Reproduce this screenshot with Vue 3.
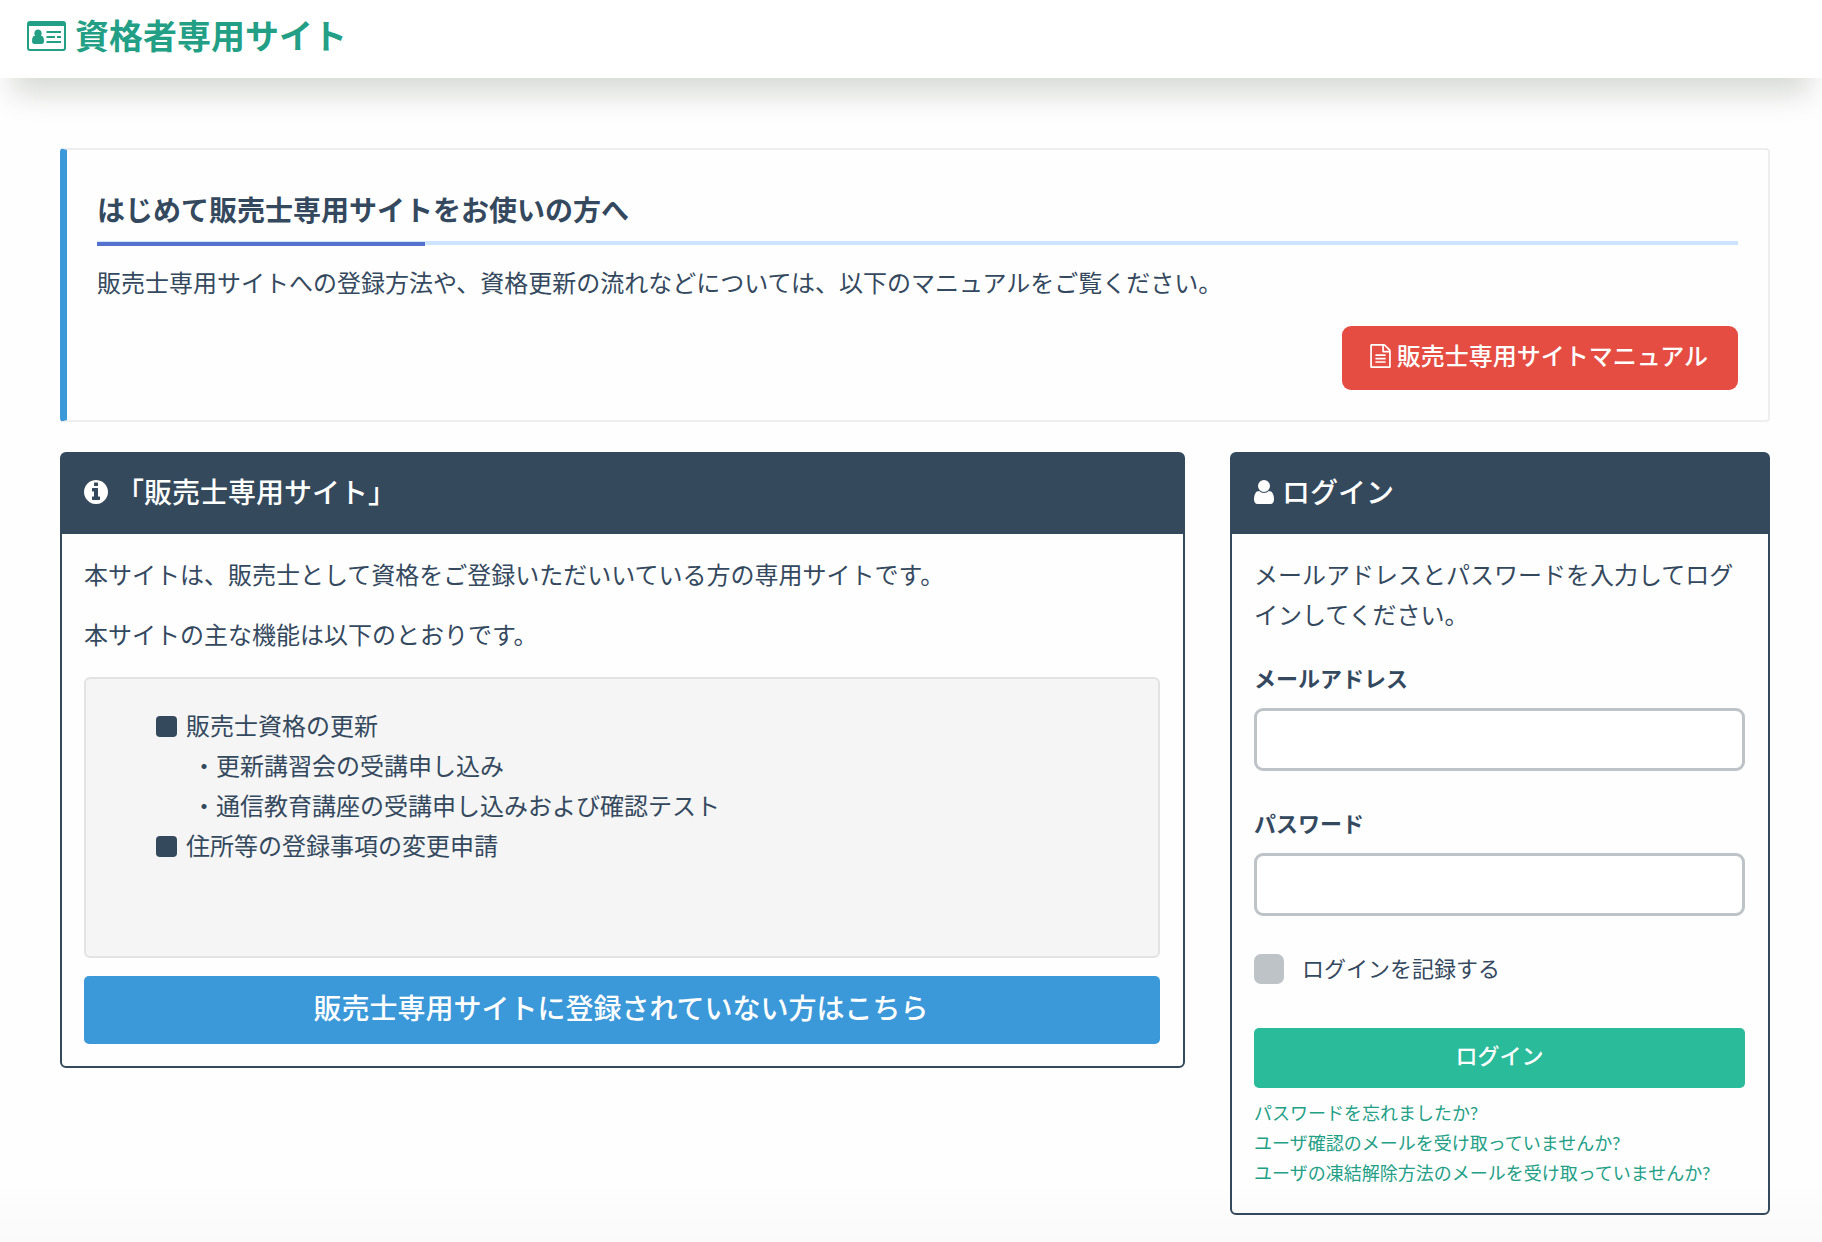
<script setup>
import { ref } from 'vue'

const email = ref('')
const password = ref('')
const remember = ref(false)

const features = [
  {
    title: '販売士資格の更新',
    items: ['更新講習会の受講申し込み', '通信教育講座の受講申し込みおよび確認テスト']
  },
  { title: '住所等の登録事項の変更申請', items: [] }
]

const helpLinks = [
  'パスワードを忘れましたか?',
  'ユーザ確認のメールを受け取っていませんか?',
  'ユーザの凍結解除方法のメールを受け取っていませんか?'
]
</script>

<template>
  <div class="page">
    <header class="site-header">
      <a class="brand" href="#">
        <svg class="brand-icon" viewBox="0 0 39 30" aria-hidden="true">
          <path
            fill-rule="evenodd"
            d="M3 0h33a3 3 0 0 1 3 3v24a3 3 0 0 1-3 3H3a3 3 0 0 1-3-3V3a3 3 0 0 1 3-3zM2 5v22q0 1 1 1h33q1 0 1-1V5z"
          />
          <path d="M11 8.500a3.500 3.700 0 0 1 2.800 6.100q3.200.4 3.200 5.400 0 3-2.500 3h-7q-2.500 0-2.500-3 0-5 3.200-5.400A3.500 3.700 0 0 1 11 8.500z" />
          <path d="M19.500 10H34v2H19.500zM19.500 15H28v2h-8.500zM30 15h4v2h-4zM19.500 20H34v2H19.500z" />
        </svg>
        <span>資格者専用サイト</span>
      </a>
    </header>

    <main class="content">
      <section class="callout">
        <h2>はじめて販売士専用サイトをお使いの方へ</h2>
        <p>販売士専用サイトへの登録方法や、資格更新の流れなどについては、以下のマニュアルをご覧ください。</p>
        <div class="callout-actions">
          <a class="btn btn-danger" href="#">
            <svg class="file-icon" viewBox="128 0 1536 1792" aria-hidden="true">
              <path d="M1596 380q28 28 48 76t20 88v1152q0 40-28 68t-68 28h-1344q-40 0-68-28t-28-68v-1600q0-40 28-68t68-28h896q40 0 88 20t76 48zm-444-244v376h376q-10-29-22-41l-313-313q-12-12-41-22zm384 1528v-1024h-416q-40 0-68-28t-28-68v-416h-768v1536h1280zm-1024-864q0-14 9-23t23-9h704q14 0 23 9t9 23v64q0 14-9 23t-23 9h-704q-14 0-23-9t-9-23v-64zm736 224q14 0 23 9t9 23v64q0 14-9 23t-23 9h-704q-14 0-23-9t-9-23v-64q0-14 9-23t23-9h704zm0 256q14 0 23 9t9 23v64q0 14-9 23t-23 9h-704q-14 0-23-9t-9-23v-64q0-14 9-23t23-9h704z" />
            </svg>
            <span>販売士専用サイトマニュアル</span>
          </a>
        </div>
      </section>

      <div class="columns">
        <section class="panel panel-about">
          <h3 class="panel-heading">
            <svg class="info-icon" viewBox="128 128 1536 1536" aria-hidden="true">
              <path d="M1152 1376v-160q0-14-9-23t-23-9h-96v-512q0-14-9-23t-23-9h-320q-14 0-23 9t-9 23v160q0 14 9 23t23 9h96v320h-96q-14 0-23 9t-9 23v160q0 14 9 23t23 9h448q14 0 23-9t9-23zm-128-896v-160q0-14-9-23t-23-9h-192q-14 0-23 9t-9 23v160q0 14 9 23t23 9h192q14 0 23-9t9-23zm640 416q0 209-103 385.500t-279.500 279.500-385.500 103-385.500-103-279.500-279.500-103-385.500 103-385.500 279.500-279.500 385.500-103 385.500 103 279.500 279.500 103 385.500z" />
            </svg>
            <span>「販売士専用サイト」</span>
          </h3>
          <div class="panel-body">
            <p>本サイトは、販売士として資格をご登録いただいいている方の専用サイトです。</p>
            <p>本サイトの主な機能は以下のとおりです。</p>
            <div class="well">
              <ul class="features">
                <li v-for="feature in features" :key="feature.title">
                  <span class="feature">{{ feature.title }}</span>
                  <ul v-if="feature.items.length" class="sub-features">
                    <li v-for="item in feature.items" :key="item">・{{ item }}</li>
                  </ul>
                </li>
              </ul>
            </div>
            <a class="btn btn-info" href="#">販売士専用サイトに登録されていない方はこちら</a>
          </div>
        </section>

        <section class="panel panel-login">
          <h3 class="panel-heading">
            <svg class="user-icon" viewBox="256 128 1280 1536" aria-hidden="true">
              <path d="M1536 1399q0 109-62.500 187t-150.500 78h-854q-88 0-150.500-78t-62.500-187q0-85 8.500-160.500t31.500-152 58.500-131 94-89 134.500-34.500q131 128 313 128t313-128q76 0 134.500 34.500t94 89 58.500 131 31.500 152 8.500 160.500zm-256-887q0 159-112.500 271.500t-271.500 112.500-271.500-112.500-112.500-271.500 112.500-271.500 271.500-112.500 271.500 112.500 112.500 271.500z" />
            </svg>
            <span>ログイン</span>
          </h3>
          <form class="panel-body" @submit.prevent>
            <p>メールアドレスとパスワードを入力してログインしてください。</p>
            <div class="field">
              <label for="email">メールアドレス</label>
              <input id="email" v-model="email" type="email" />
            </div>
            <div class="field">
              <label for="password">パスワード</label>
              <input id="password" v-model="password" type="password" />
            </div>
            <div class="remember">
              <input id="remember" v-model="remember" type="checkbox" />
              <label for="remember">ログインを記録する</label>
            </div>
            <button class="btn btn-primary" type="submit">ログイン</button>
            <ul class="help-links">
              <li v-for="link in helpLinks" :key="link"><a href="#">{{ link }}</a></li>
            </ul>
          </form>
        </section>
      </div>
    </main>
  </div>
</template>

<style>
body {
  margin: 0;
  background: #fefefe;
}
</style>

<style scoped>
.page {
  box-sizing: border-box;
  min-height: 100vh;
  padding-bottom: 27px;
  background: linear-gradient(to top, #fafafa, #fefefe 60px);
  color: #34495e;
  font-family: Lato, "Noto Sans CJK JP", sans-serif;
  font-size: 24px;
  line-height: 40px;
}

.page * {
  box-sizing: border-box;
}

a {
  color: #229f85;
  text-decoration: none;
}

p {
  margin: 0 0 20px;
}

ul {
  margin: 0;
  padding: 0;
  list-style: none;
}

svg {
  flex: none;
  fill: currentColor;
}

.site-header {
  display: flex;
  padding: 16px 27px 22px;
  background: #fff;
  box-shadow: 0 28px 30px -12px #d7dad6;
}

.brand {
  display: flex;
  align-items: center;
  gap: 9px;
  font-size: 34px;
  font-weight: 700;
}

.brand-icon {
  width: 39px;
  height: 30px;
}

.content {
  padding: 70px 52px 0 60px;
}

.callout {
  margin-bottom: 30px;
  padding: 30px;
  border: 2px solid #eee;
  border-left: 7px solid #3b99d9;
  border-radius: 4px;
}

.callout h2 {
  position: relative;
  margin: 0 0 18px;
  padding: 10px 0 11px;
  border-bottom: 4px solid #cce4ff;
  font-size: 28px;
  font-weight: 700;
}

.callout h2::after {
  content: "";
  position: absolute;
  bottom: -5px;
  left: 0;
  width: 20%;
  height: 4px;
  background: #5472cd;
}

.callout p {
  margin-bottom: 23px;
}

.callout-actions {
  display: flex;
  justify-content: flex-end;
}

.btn {
  display: flex;
  justify-content: center;
  align-items: center;
  border: 0;
  border-radius: 5px;
  color: #fff;
  font-family: inherit;
  font-weight: 500;
  cursor: pointer;
}

.btn-danger {
  gap: 6px;
  padding: 10px 30px 14px 28px;
  border-radius: 9px;
  background: #e54d42;
}

.file-icon {
  width: 21px;
  height: 24px;
}

.btn-info {
  padding: 12px 22px 16px 20px;
  background: #3b99d9;
  font-size: 28px;
}

.btn-primary {
  width: 100%;
  padding: 8px 20px 12px;
  background: #2abb9b;
  font-size: 22px;
  line-height: 40px;
}

.columns {
  display: grid;
  grid-template-columns: repeat(12, 1fr);
  align-items: start;
  gap: 45px;
}

.panel {
  border: 2px solid #34495c;
  border-radius: 6px;
}

.panel-about {
  grid-column: span 8;
}

.panel-login {
  grid-column: span 4;
}

.panel-heading {
  display: flex;
  align-items: center;
  gap: 8px;
  margin: 0;
  padding: 18px 22px 22px;
  background: #34495c;
  color: #fff;
  font-size: 28px;
  font-weight: 500;
}

.info-icon {
  width: 24px;
  height: 24px;
}

.user-icon {
  width: 20px;
  height: 24px;
}

.panel-body {
  padding: 21px 23px 22px 22px;
}

.well {
  margin: 22px 0 18px;
  padding: 27px 70px 90px;
  border: 2px solid #e3e3e3;
  border-radius: 6px;
  background: #f5f5f5;
}

.feature {
  display: flex;
  align-items: center;
  gap: 9px;
}

.feature::before {
  content: "";
  width: 21px;
  height: 21px;
  border-radius: 4px;
  background: #34495c;
}

.sub-features {
  padding-left: 36px;
}

.field {
  margin: 22px 0 31px;
}

.field label {
  display: block;
  padding: 2px 0;
  font-size: 22px;
  font-weight: 700;
}

.field input {
  display: block;
  width: 100%;
  height: 63px;
  margin: 7px 0 0;
  padding: 0 16px;
  border: 3px solid #bdc3c7;
  border-radius: 9px;
  background: #fff;
  color: inherit;
  font: inherit;
}

.remember {
  display: flex;
  align-items: center;
  gap: 18px;
  margin-bottom: 37px;
  padding: 2px 0;
  font-size: 22px;
}

.remember input {
  appearance: none;
  width: 30px;
  height: 30px;
  margin: 0;
  border-radius: 7px;
  background: #bdc3c7;
}

.remember input:checked {
  background: #2abb9b;
}

.help-links {
  padding: 10px 0 3px;
  font-size: 18px;
  line-height: 30px;
}
</style>
